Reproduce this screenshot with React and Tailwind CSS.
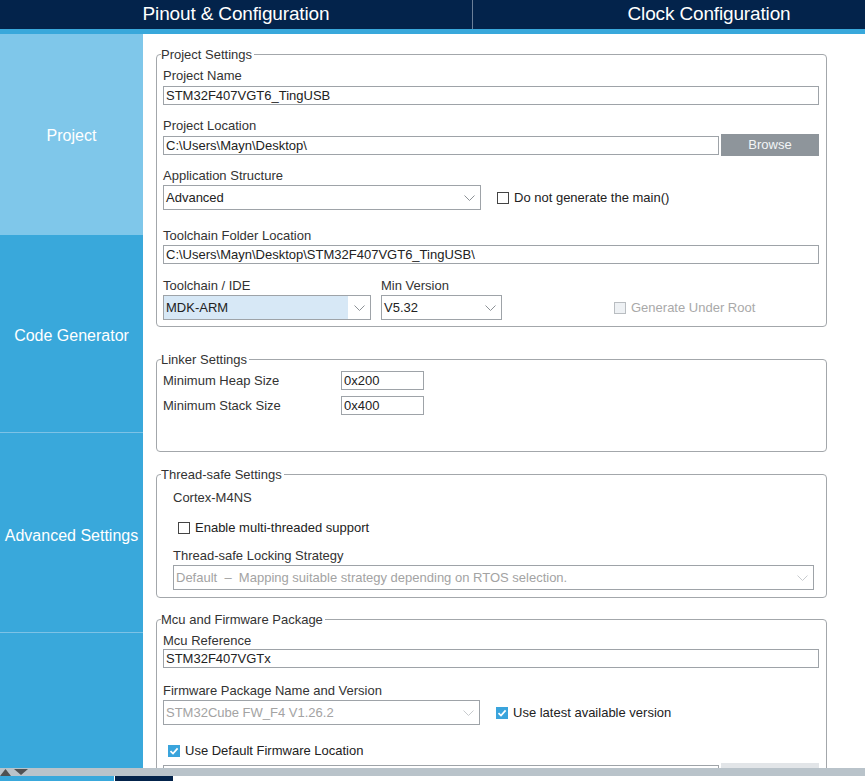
import React from "react";

const Chevron = ({ color = "#8c9196" }) => (
  <svg width="11" height="6" viewBox="0 0 11 6">
    <path d="M0.5 0.5L5.5 5.5L10.5 0.5" fill="none" stroke={color} strokeWidth="1" />
  </svg>
);

function Label({ children, className = "" }) {
  return (
    <div className={`h-[15px] leading-[15px] text-[13px] text-[#333] whitespace-nowrap ${className}`}>
      {children}
    </div>
  );
}

function TextInput({ value, className = "" }) {
  return (
    <div
      className={`h-[19px] border border-[#9ea3a8] bg-white pl-[2px] text-[13px] leading-[17px] text-[#222] whitespace-nowrap overflow-hidden ${className}`}
    >
      {value}
    </div>
  );
}

function Select({ value, className = "", disabled, highlight }) {
  return (
    <div className={`flex h-[25px] border border-[#9ea3a8] bg-white ${className}`}>
      <div
        className={`flex-1 flex items-center pl-[2px] text-[13px] whitespace-nowrap overflow-hidden ${
          highlight ? "bg-[#d7e8f6]" : ""
        } ${disabled ? "text-[#a3a3a3]" : "text-[#222]"}`}
      >
        {value}
      </div>
      <div className="w-[22px] flex items-center justify-center shrink-0">
        <Chevron color={disabled ? "#c8cbce" : "#8c9196"} />
      </div>
    </div>
  );
}

function Checkbox({ checked, disabled, className = "" }) {
  if (checked) {
    return (
      <div className={`w-[12px] h-[12px] bg-[#3aa4dc] flex items-center justify-center shrink-0 ${className}`}>
        <svg width="12" height="12" viewBox="0 0 12 12">
          <path d="M2.5 6.2L5 8.6L9.6 3.4" fill="none" stroke="white" strokeWidth="1.7" />
        </svg>
      </div>
    );
  }
  return (
    <div
      className={`w-[12px] h-[12px] border shrink-0 ${
        disabled ? "border-[#b9bdc1] bg-[#eef1f4]" : "border-[#444] bg-white"
      } ${className}`}
    />
  );
}

function Group({ title, className = "", children }) {
  return (
    <fieldset
      className={`ml-[13px] w-[671px] shrink-0 border border-[#a3a7ab] rounded-[4px] pl-[6px] pr-[7px] ${className}`}
    >
      <legend className="ml-[-2px] pr-[2px] text-[13px] leading-[15px] text-[#333]">{title}</legend>
      {children}
    </fieldset>
  );
}

function SideItem({ label, active, className = "" }) {
  return (
    <div
      className={`flex items-center justify-center pt-[2px] text-white text-[16px] shrink-0 ${
        active ? "bg-[#7fc7ea]" : "border-b border-[#7dc2e6]"
      } ${className}`}
    >
      {label}
    </div>
  );
}

export default function App() {
  return (
    <div className="w-[865px] h-[781px] overflow-hidden bg-white flex flex-col font-['Liberation_Sans',Arial,sans-serif]">
      {/* Header */}
      <div className="h-[29px] bg-[#03234b] flex shrink-0 overflow-hidden">
        <div className="w-[472px] shrink-0 flex items-center justify-center text-white text-[19px] tracking-[-0.15px]">
          Pinout &amp; Configuration
        </div>
        <div className="w-[1px] shrink-0 bg-[#6b7f98]" />
        <div className="w-[472px] shrink-0 flex items-center justify-center text-white text-[19px] tracking-[-0.15px]">
          Clock Configuration
        </div>
      </div>
      <div className="h-[5px] bg-[#39a8db] shrink-0" />

      {/* Body */}
      <div className="flex h-[734px] shrink-0 overflow-hidden">
        <div className="w-[143px] shrink-0 bg-[#39a8db] flex flex-col">
          <SideItem label="Project" active className="h-[201px]" />
          <SideItem label="Code Generator" className="h-[198px] pt-[4px]" />
          <SideItem label="Advanced Settings" className="h-[200px] pt-[6px]" />
          <div className="flex-1" />
        </div>

        <div className="flex-1 overflow-hidden flex flex-col">
          {/* Project Settings */}
          <Group title="Project Settings" className="mt-[13px] pb-[6px]">
            <Label className="mt-[6px]">Project Name</Label>
            <TextInput className="mt-[3px]" value="STM32F407VGT6_TingUSB" />
            <Label className="mt-[13px]">Project Location</Label>
            <div className="mt-[1px] flex items-center gap-[2px]">
              <TextInput className="w-[556px]" value={"C:\\Users\\Mayn\\Desktop\\"} />
              <div className="w-[98px] h-[22px] bg-[#8e959b] text-[#f3f5f7] text-[13px] flex items-center justify-center">
                Browse
              </div>
            </div>
            <Label className="mt-[12px]">Application Structure</Label>
            <div className="mt-[2px] flex items-center">
              <Select className="w-[318px]" value="Advanced" />
              <Checkbox className="ml-[16px]" />
              <span className="ml-[5px] text-[13px] text-[#222] whitespace-nowrap">Do not generate the main()</span>
            </div>
            <Label className="mt-[18px]">Toolchain Folder Location</Label>
            <TextInput className="mt-[2px]" value={"C:\\Users\\Mayn\\Desktop\\STM32F407VGT6_TingUSB\\"} />
            <div className="mt-[14px] flex">
              <div className="w-[208px] shrink-0">
                <Label>Toolchain / IDE</Label>
                <Select className="mt-[2px]" highlight value="MDK-ARM" />
              </div>
              <div className="ml-[10px] w-[121px] shrink-0">
                <Label>Min Version</Label>
                <Select className="mt-[2px]" value="V5.32" />
              </div>
              <div className="ml-[112px] self-end h-[25px] flex items-center">
                <Checkbox disabled />
                <span className="ml-[5px] text-[13px] text-[#a9a9a9] whitespace-nowrap">Generate Under Root</span>
              </div>
            </div>
          </Group>

          {/* Linker Settings */}
          <Group title="Linker Settings" className="mt-[25px] pb-[36px]">
            <div className="mt-[4px] flex items-center h-[19px]">
              <Label className="w-[178px]">Minimum Heap Size</Label>
              <TextInput className="w-[83px]" value="0x200" />
            </div>
            <div className="mt-[6px] flex items-center h-[19px]">
              <Label className="w-[178px]">Minimum Stack Size</Label>
              <TextInput className="w-[83px]" value="0x400" />
            </div>
          </Group>

          {/* Thread-safe Settings */}
          <Group title="Thread-safe Settings" className="mt-[15px] pb-[7px]">
            <Label className="mt-[8px] ml-[10px]">Cortex-M4NS</Label>
            <div className="mt-[15px] ml-[15px] flex items-center h-[15px]">
              <Checkbox />
              <span className="ml-[5px] text-[13px] text-[#222] whitespace-nowrap">Enable multi-threaded support</span>
            </div>
            <Label className="mt-[13px] ml-[10px]">Thread-safe Locking Strategy</Label>
            <Select
              className="mt-[2px] ml-[10px] w-[641px]"
              disabled
              value={"Default \u00a0\u2013\u00a0 Mapping suitable strategy depending on RTOS selection."}
            />
          </Group>

          {/* Mcu and Firmware Package */}
          <Group title="Mcu and Firmware Package" className="mt-[14px] pb-[20px]">
            <Label className="mt-[6px]">Mcu Reference</Label>
            <TextInput className="mt-[1px]" value="STM32F407VGTx" />
            <Label className="mt-[15px]">Firmware Package Name and Version</Label>
            <div className="mt-[2px] flex items-center">
              <Select className="w-[317px]" disabled value="STM32Cube FW_F4 V1.26.2" />
              <Checkbox checked className="ml-[16px]" />
              <span className="ml-[5px] text-[13px] text-[#222] whitespace-nowrap">Use latest available version</span>
            </div>
            <div className="mt-[18px] ml-[5px] flex items-center h-[15px]">
              <Checkbox checked />
              <span className="ml-[5px] text-[13px] text-[#222] whitespace-nowrap">Use Default Firmware Location</span>
            </div>
            <div className="mt-[5px] flex items-center gap-[2px]">
              <TextInput className="w-[556px]" value="" />
              <div className="w-[98px] h-[22px] bg-[#e2e5e8]" />
            </div>
          </Group>
        </div>
      </div>

      {/* Bottom bar */}
      <div className="h-[8px] bg-[#b9c3ca] shrink-0 flex items-start">
        <svg width="30" height="8" viewBox="0 0 30 8">
          <path d="M0 8L5.5 1L11 8Z" fill="#4f5153" />
          <path d="M14 1L28 1L21 7Z" fill="#4f5153" />
        </svg>
      </div>
      <div className="h-[5px] shrink-0 flex">
        <div className="w-[114px] bg-[#39a8db]" />
        <div className="w-[1px] bg-white" />
        <div className="w-[58px] bg-[#03234b]" />
      </div>
    </div>
  );
}
